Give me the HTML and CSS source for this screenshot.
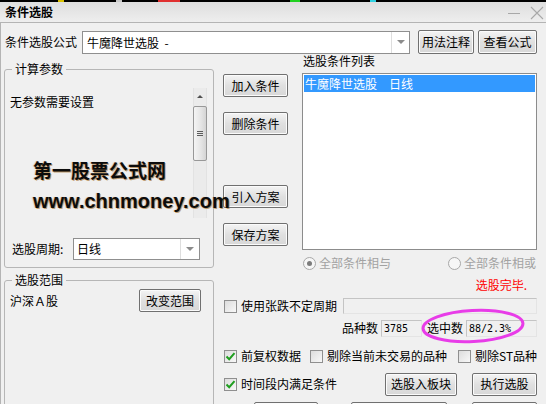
FILE: index.html
```html
<!DOCTYPE html>
<html lang="zh-CN">
<head>
    <meta charset="UTF-8">
    <meta name="viewport" content="width=device-width, initial-scale=1.0">
    <title>条件选股</title>
    <link rel="stylesheet" href="styles.css">
</head>
<body>
<div class="window">
    <div class="screen-edge">
        <span class="seg yellow"></span>
        <span class="seg grey"></span>
        <span class="seg red"></span>
        <span class="seg green"></span>
        <span class="seg cyan"></span>
    </div>

    <div class="titlebar">
        <span class="title">条件选股</span>
        <span class="caption-btns">
            <svg width="14" height="14" viewBox="0 0 14 14"><line x1="1" y1="7.5" x2="13" y2="7.5" stroke="#a8a8a8" stroke-width="1"/></svg>
            <svg width="14" height="14" viewBox="0 0 14 14"><path d="M1 1 L13 13 M13 1 L1 13" stroke="#a8a8a8" stroke-width="1.1" fill="none"/></svg>
        </span>
    </div>

    <div class="client">
        <div class="formula-row">
            <span class="label">条件选股公式</span>
            <div class="combo formula-combo">
                <span class="combo-text">牛魔降世选股 &nbsp;-</span>
                <span class="combo-drop"><i class="arrow"></i></span>
            </div>
            <button class="btn btn-usage">用法注释</button>
            <button class="btn btn-view">查看公式</button>
        </div>

        <div class="main">
            <!-- 左侧：参数 + 范围 -->
            <div class="left-col">
                <fieldset class="group params">
                    <legend>计算参数</legend>
                    <div class="param-body">
                        <div class="param-area">
                            <p class="no-param">无参数需要设置</p>
                            <div class="watermark">
                                <div class="wm-cn">第一股票公式网</div>
                                <div class="wm-url">www.chnmoney.com</div>
                            </div>
                        </div>
                        <div class="vscroll">
                            <div class="vs-up"><i></i></div>
                            <div class="vs-thumb"><i></i><i></i><i></i></div>
                        </div>
                    </div>
                    <div class="period-row">
                        <span class="label">选股周期:</span>
                        <div class="combo period-combo">
                            <span class="combo-text">日线</span>
                            <span class="combo-drop"><i class="arrow"></i></span>
                        </div>
                    </div>
                </fieldset>

                <fieldset class="group range">
                    <legend>选股范围</legend>
                    <div class="range-row">
                        <span>沪深Ａ股</span>
                        <button class="btn cmd">改变范围</button>
                    </div>
                </fieldset>
            </div>

            <!-- 右侧：条件列表 + 选项 -->
            <div class="right-col">
                <div class="upper">
                    <div class="btn-col">
                        <button class="btn cmd">加入条件</button>
                        <button class="btn cmd del">删除条件</button>
                        <button class="btn cmd load">引入方案</button>
                        <button class="btn cmd save">保存方案</button>
                    </div>
                    <div class="list-col">
                        <div class="list-title">选股条件列表</div>
                        <div class="listbox">
                            <div class="list-item selected">牛魔降世选股　日线</div>
                        </div>
                        <div class="radio-row">
                            <label class="radio-opt"><span class="radio on"></span>全部条件相与</label>
                            <label class="radio-opt"><span class="radio"></span>全部条件相或</label>
                        </div>
                    </div>
                </div>

                <div class="status">选股完毕.</div>

                <div class="row row-a">
                    <span class="cb"></span>
                    <span class="cb-text">使用张跌不定周期</span>
                    <span class="field field-wide"></span>
                </div>

                <div class="row row-b">
                    <span class="label">品种数</span>
                    <span class="field field-count">3785</span>
                    <span class="label label-sel">选中数</span>
                    <span class="field field-sel">88/2.3%</span>
                </div>

                <div class="row row-c">
                    <span class="cb checked"><svg width="11" height="11" viewBox="0 0 11 11"><path d="M1.5 5.5 L4.2 8.2 L9.5 2.2" stroke="#1f9e1f" stroke-width="2" fill="none"/></svg></span>
                    <span class="cb-text">前复权数据</span>
                    <span class="cb cb-mid"></span>
                    <span class="cb-text">剔除当前未交易的品种</span>
                    <span class="cb cb-st"></span>
                    <span class="cb-text">剔除ST品种</span>
                </div>

                <div class="row row-d">
                    <span class="cb checked"><svg width="11" height="11" viewBox="0 0 11 11"><path d="M1.5 5.5 L4.2 8.2 L9.5 2.2" stroke="#1f9e1f" stroke-width="2" fill="none"/></svg></span>
                    <span class="cb-text">时间段内满足条件</span>
                    <button class="btn btn-block">选股入板块</button>
                    <button class="btn cmd btn-run">执行选股</button>
                </div>

                <div class="row row-e">
                    <button class="btn btn-e1"></button>
                    <button class="btn btn-e2"></button>
                    <button class="btn cmd btn-e3"></button>
                </div>
            </div>
        </div>
    </div>

    <!-- 标注圈 -->
    <svg class="highlight" width="106" height="38" viewBox="0 0 106 38">
        <ellipse cx="53" cy="19" rx="50" ry="15.5" transform="rotate(-3 53 19)" fill="none" stroke="#e83ce8" stroke-width="3"/>
    </svg>
</div>
</body>
</html>
```

FILE: styles.css
```css
body {
    margin: 0;
    background: #f0f0f0;
    font-family: "Noto Sans CJK SC", "Liberation Sans", sans-serif;
    font-size: 12px;
    color: #000;
}
.window {
    position: relative;
    width: 546px;
    height: 404px;
    overflow: hidden;
    background: #f0f0f0;
}

/* 顶部残留的屏幕边 */
.screen-edge {
    height: 2px;
    background: #000;
    display: flex;
}
.seg { height: 2px; display: block; }
.seg.yellow { width: 6px; margin-left: 58px; background: #d8c000; }
.seg.grey { width: 6px; margin-left: 52px; background: #c8c8c8; }
.seg.red { width: 22px; margin-left: 36px; background: #e03030; }
.seg.green { width: 10px; margin-left: 110px; background: #20d020; }
.seg.cyan { width: 6px; margin-left: 70px; background: #30d0e0; }

.titlebar {
    height: 20px;
    background: linear-gradient(#dedede, #eeeeee);
    display: flex;
    align-items: center;
    justify-content: space-between;
    padding: 0 2px 0 5px;
}
.title {
    font-weight: bold;
    font-size: 12px;
    line-height: 14px;
}
.caption-btns {
    display: flex;
    gap: 9px;
    padding-top: 2px;
}

.client {
    border-top: 1px solid #b4b4b4;
    border-left: 1px solid #b4b4b4;
    height: 381px;
}

.label { line-height: 14px; white-space: nowrap; }

.formula-row {
    display: flex;
    align-items: center;
    margin-top: 7px;
    height: 24px;
    padding-left: 4px;
}
.formula-row .label { width: 77px; }

.combo {
    display: flex;
    background: #fff;
    border: 1px solid #8f8f8f;
    box-sizing: border-box;
}
.combo-text {
    flex: 1;
    line-height: 21px;
    padding-left: 4px;
    white-space: nowrap;
}
.combo-drop {
    width: 17px;
    border-left: 1px solid #dedede;
    display: flex;
    align-items: center;
    justify-content: center;
}
.arrow {
    width: 0;
    height: 0;
    border-left: 4px solid transparent;
    border-right: 4px solid transparent;
    border-top: 4px solid #8c8c8c;
}
.formula-combo { width: 328px; height: 23px; margin-right: 8px; }

.btn {
    font-family: "Noto Sans CJK SC", "Liberation Sans", sans-serif;
    font-size: 12px;
    color: #000;
    border: 1px solid #707070;
    border-radius: 2px;
    background: linear-gradient(#f4f4f4, #e0e0e0 50%, #d8d8d8);
    box-shadow: inset 0 0 0 1px #fbfbfb;
    padding: 0;
    height: 23px;
    line-height: 20px;
    box-sizing: border-box;
    white-space: nowrap;
}
.btn-usage { width: 56px; height: 24px; margin-right: 4px; }
.btn-view { width: 59px; height: 24px; }
.cmd { width: 65px; }

.main {
    display: flex;
    padding-left: 3px;
}

/* 左列 */
.left-col {
    width: 210px;
    padding-top: 8px;
    margin-right: 9px;
}
.group {
    margin: 0;
    padding: 0 6px 0 5px;
    border: 1px solid #b6b6b6;
    border-radius: 3px;
    min-width: 0;
}
.group legend {
    padding: 0 3px;
    margin-left: 2px;
    line-height: 14px;
    font-size: 12px;
}
.params { padding-bottom: 7px; }
.param-body {
    display: flex;
    height: 154px;
}
.param-area {
    flex: 1;
    min-width: 0;
}
.no-param {
    margin: 18px 0 0 0;
    line-height: 16px;
}
.watermark {
    position: relative;
    z-index: 1;
    margin: 48px 0 0 23px;
    white-space: nowrap;
    font-weight: bold;
    color: #0c0c0c;
    text-shadow: 1px 1px 0 rgba(150, 90, 10, 0.55), -1px 0 1px rgba(190, 120, 30, 0.35);
}
.wm-cn {
    font-size: 19px;
    line-height: 24px;
    letter-spacing: 0;
}
.wm-url {
    font-family: "Liberation Sans", Arial, sans-serif;
    font-size: 20px;
    line-height: 24px;
    margin-top: 7px;
}
.vscroll {
    width: 14px;
    height: 130px;
    margin-top: 12px;
    background: #ebebeb;
    border-left: 1px solid #e2e2e2;
    border-right: 1px solid #e2e2e2;
    box-sizing: border-box;
}
.vs-up {
    height: 17px;
    display: flex;
    align-items: center;
    justify-content: center;
}
.vs-up i {
    width: 0;
    height: 0;
    border-left: 3px solid transparent;
    border-right: 3px solid transparent;
    border-bottom: 3px solid #505050;
}
.vs-thumb {
    height: 55px;
    margin: 1px 0 0 -1px;
    width: 14px;
    box-sizing: border-box;
    border: 1px solid #989898;
    border-radius: 2px;
    background: linear-gradient(to right, #f4f4f4, #e4e4e4 60%, #d4d4d4);
    display: flex;
    flex-direction: column;
    align-items: center;
    justify-content: center;
    gap: 1px;
}
.vs-thumb i {
    display: block;
    width: 6px;
    height: 1px;
    background: #5c5c5c;
}
.period-row {
    display: flex;
    align-items: center;
    margin-top: 8px;
    height: 22px;
    padding-left: 2px;
}
.period-row .label { width: 61px; }
.period-combo { width: 127px; height: 22px; }
.period-combo .combo-text { line-height: 20px; padding-left: 3px; }
.period-combo .combo-drop { width: 18px; }

.range {
    margin-top: 5px;
    height: 140px;
}
.range-row {
    display: flex;
    align-items: center;
    justify-content: space-between;
    margin-top: 2px;
    height: 23px;
    padding-right: 6px;
}
.range-row .cmd { width: 62px; }

/* 右列 */
.right-col {
    width: 314px;
}
.upper {
    display: flex;
}
.btn-col {
    width: 65px;
    display: flex;
    flex-direction: column;
    padding-top: 20px;
}
.btn-col .del { margin-top: 15px; }
.btn-col .load { margin-top: 50px; }
.btn-col .save { margin-top: 15px; }
.list-col {
    width: 235px;
    margin-left: 14px;
}
.list-title {
    line-height: 14px;
    padding-left: 1px;
}
.listbox {
    margin-top: 5px;
    height: 177px;
    background: #fff;
    border: 1px solid #8c8c8c;
    box-sizing: border-box;
    padding: 1px;
}
.list-item {
    height: 17px;
    line-height: 17px;
    padding-left: 1px;
    white-space: nowrap;
}
.list-item.selected {
    background: #3399ff;
    color: #fff;
}
.radio-row {
    display: flex;
    justify-content: space-between;
    margin-top: 6px;
    height: 14px;
    padding: 0 1px;
}
.radio-opt {
    display: flex;
    align-items: center;
    gap: 3px;
    color: #a2a2a2;
    line-height: 14px;
}
.radio {
    width: 11px;
    height: 11px;
    border: 1px solid #a8a8a8;
    border-radius: 50%;
    background: #f6f6f6;
    display: flex;
    align-items: center;
    justify-content: center;
}
.radio.on::after {
    content: "";
    width: 5px;
    height: 5px;
    border-radius: 50%;
    background: #7c7c7c;
}

.status {
    margin-top: 8px;
    line-height: 14px;
    text-align: right;
    padding-right: 10px;
    color: #ff0000;
}

.row {
    display: flex;
    align-items: center;
    padding-left: 1px;
}
.cb {
    width: 13px;
    height: 13px;
    box-sizing: border-box;
    border: 1px solid #8f8f8f;
    background: linear-gradient(135deg, #dcdcdc, #f8f8f8);
    display: flex;
    align-items: center;
    justify-content: center;
    flex: none;
}
.cb-text {
    margin-left: 4px;
    line-height: 14px;
    white-space: nowrap;
}
.field {
    height: 17px;
    box-sizing: border-box;
    border: 1px solid #c4c4c4;
    border-right-color: #e4e4e4;
    border-bottom-color: #e4e4e4;
    background: #f0f0f0;
    font-family: "DejaVu Sans Mono", "Liberation Mono", monospace;
    font-size: 10px;
    line-height: 15px;
    padding-left: 2px;
}
.row-a { margin-top: 6px; height: 16px; }
.field-wide { flex: 1; margin-left: 6px; height: 16px; }
.row-b {
    margin-top: 5px;
    height: 18px;
    justify-content: flex-end;
}
.field-count { width: 41px; margin-left: 3px; }
.label-sel { margin-left: 5px; }
.field-sel { width: 71px; margin-left: 3px; }
.row-c { margin-top: 10px; height: 18px; }
.cb-mid { margin-left: 9px; }
.cb-st { margin-left: 11px; }
.row-d { margin-top: 8px; height: 22px; }
.btn-block { width: 72px; height: 23px; margin-left: 48px; }
.btn-run { height: 23px; margin-left: 15px; }
.row-e { margin-top: 7px; height: 23px; }
.btn-e1 { width: 64px; margin-left: 30px; }
.btn-e2 { width: 96px; margin-left: 33px; }
.btn-e3 { margin-left: 25px; }

.highlight {
    position: absolute;
    left: 420px;
    top: 307px;
}
```
